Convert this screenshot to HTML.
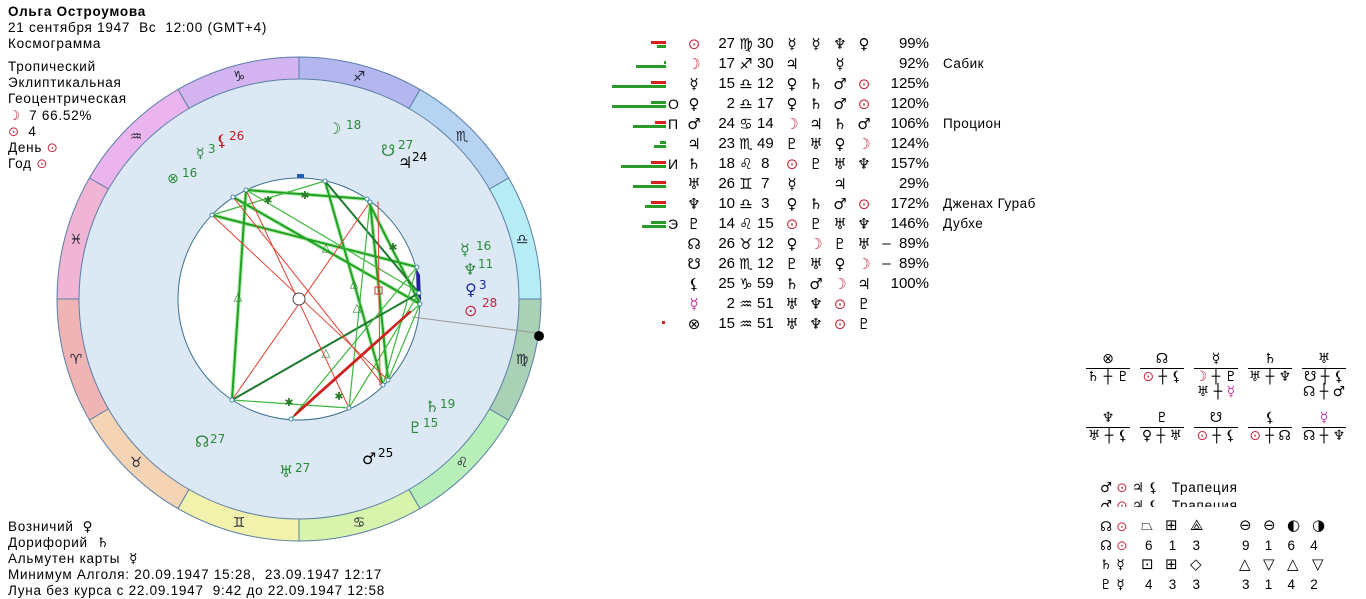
<!DOCTYPE html>
<html><head><meta charset="utf-8"><style>
body{margin:0;width:1366px;height:599px;background:#fff;position:relative;overflow:hidden;font-family:"Liberation Sans","DejaVu Sans",sans-serif;color:#000}
.t{position:absolute;font-size:13.5px;letter-spacing:.75px;white-space:nowrap;line-height:16px}
.y{font-family:"DejaVu Sans",sans-serif;letter-spacing:0}
.red{color:#c8283c}.grn{color:#2a8a2a}.pink{color:#c03aa0}.blu{color:#2030b0}
.row{position:absolute;left:0;height:20px;font-size:15px;line-height:20px;font-family:"Liberation Sans","DejaVu Sans",sans-serif}
.row span{position:absolute;top:0;white-space:nowrap}
.g,.s,.c1,.c2,.c3,.c4{font-family:"DejaVu Sans",sans-serif;font-size:15px}
.g{left:684px;width:20px;text-align:center}
.d{left:704px;width:31px;text-align:right}
.s{left:736px;width:20px;text-align:center}
.m{left:757px;width:22px}
.c1{left:780px;width:24px;text-align:center}
.c2{left:804px;width:24px;text-align:center}
.c3{left:828px;width:24px;text-align:center}
.c4{left:852px;width:24px;text-align:center}
.p{left:870px;width:59px;text-align:right}
.n{left:943px;font-size:13.5px;letter-spacing:.5px}
.l{left:668px;width:14px;font-size:14px}
.bar{position:absolute;height:3px}
.gb{background:#2a9a2a}.rb{background:#d82020}
.blk{position:absolute;text-align:center;font-size:14px;font-family:"DejaVu Sans",sans-serif;line-height:15px}
.blk .ln{height:1px;background:#000;margin:1px 0}
.sh{position:absolute;font-size:15px;font-family:"DejaVu Sans",sans-serif}
</style></head><body>
<div class="t" style="left:8px;top:4px;font-weight:bold">Ольга Остроумова</div>
<div class="t" style="left:8px;top:20px">21 сентября 1947&nbsp; Вс&nbsp; 12:00 (GMT+4)</div>
<div class="t" style="left:8px;top:36px">Космограмма</div>
<div class="t" style="left:8px;top:59px">Тропический</div>
<div class="t" style="left:8px;top:75px">Эклиптикальная</div>
<div class="t" style="left:8px;top:91px">Геоцентрическая</div>
<div class="t" style="left:8px;top:108px"><span class="red y">☽</span>&nbsp; 7 66.52%</div>
<div class="t" style="left:8px;top:124px"><span class="red y">⊙</span>&nbsp; 4</div>
<div class="t" style="left:8px;top:140px">День <span class="red y">⊙</span></div>
<div class="t" style="left:8px;top:156px">Год <span class="red y">⊙</span></div>

<div class="t" style="left:8px;top:519px">Возничий &nbsp;<span class="y">♀</span></div>
<div class="t" style="left:8px;top:535px">Дорифорий &nbsp;<span class="y">♄</span></div>
<div class="t" style="left:8px;top:551px">Альмутен карты &nbsp;<span class="y">☿</span></div>
<div class="t" style="left:8px;top:567px">Минимум Алголя: 20.09.1947 15:28,&nbsp; 23.09.1947 12:17</div>
<div class="t" style="left:8px;top:583px">Луна без курса с 22.09.1947&nbsp; 9:42 до 22.09.1947 12:58</div>

<svg style="position:absolute;left:0;top:0" width="600" height="599" viewBox="0 0 600 599" font-family="DejaVu Sans,sans-serif">
<circle cx="299" cy="299" r="220" fill="#dce8f3"/>
<g stroke="#5a7fa8" stroke-width="1">
<path d="M541,299 A242,242 0 0 0 508.6,178 L489.5,189 A220,220 0 0 1 519,299Z" fill="#b6ecf4"/>
<path d="M508.6,178 A242,242 0 0 0 420,89.4 L409,108.5 A220,220 0 0 1 489.5,189Z" fill="#b6d4f2"/>
<path d="M420,89.4 A242,242 0 0 0 299,57 L299,79 A220,220 0 0 1 409,108.5Z" fill="#b4b6f0"/>
<path d="M299,57 A242,242 0 0 0 178,89.4 L189,108.5 A220,220 0 0 1 299,79Z" fill="#d4b4f0"/>
<path d="M178,89.4 A242,242 0 0 0 89.4,178 L108.5,189 A220,220 0 0 1 189,108.5Z" fill="#ecb4ee"/>
<path d="M89.4,178 A242,242 0 0 0 57,299 L79,299 A220,220 0 0 1 108.5,189Z" fill="#f0b4d4"/>
<path d="M57,299 A242,242 0 0 0 89.4,420 L108.5,409 A220,220 0 0 1 79,299Z" fill="#f0b4b4"/>
<path d="M89.4,420 A242,242 0 0 0 178,508.6 L189,489.5 A220,220 0 0 1 108.5,409Z" fill="#f4d4b4"/>
<path d="M178,508.6 A242,242 0 0 0 299,541 L299,519 A220,220 0 0 1 189,489.5Z" fill="#f2f2ac"/>
<path d="M299,541 A242,242 0 0 0 420,508.6 L409,489.5 A220,220 0 0 1 299,519Z" fill="#d8f4ac"/>
<path d="M420,508.6 A242,242 0 0 0 508.6,420 L489.5,409 A220,220 0 0 1 409,489.5Z" fill="#b8eeb8"/>
<path d="M508.6,420 A242,242 0 0 0 541,299 L519,299 A220,220 0 0 1 489.5,409Z" fill="#aad0b6"/>
</g>
<circle cx="299" cy="299" r="121" fill="#fff" stroke="#3a7090"/>
<g font-size="14" fill="#223" text-anchor="middle">
<text x="522" y="244">♎</text><text x="462" y="141">♏</text><text x="359" y="81">♐</text><text x="239" y="81">♑</text>
<text x="136" y="141">♒</text><text x="76" y="244">♓</text><text x="76" y="364">♈</text><text x="136" y="467">♉</text>
<text x="239" y="527">♊</text><text x="359" y="527">♋</text><text x="462" y="467">♌</text><text x="522" y="364">♍</text>
</g>
<line x1="412" y1="317" x2="537" y2="333" stroke="#999"/>
<circle cx="539" cy="336" r="5" fill="#000"/>
<rect x="297" y="174" width="7" height="4" fill="#2060b0"/>
<path d="M416,268 L420,275 L421,300 L417,305Z" fill="#2020a0"/>
<g fill="none" stroke-linecap="round">
<g stroke="#9ee89e" stroke-width="4" opacity=".8">
<line x1="246" y1="190" x2="232" y2="400"/><line x1="246" y1="190" x2="367" y2="199"/><line x1="212" y1="215" x2="417" y2="267"/>
<line x1="233" y1="197" x2="420" y2="304"/><line x1="325" y1="181" x2="383" y2="385"/><line x1="370" y1="202" x2="388" y2="380"/><line x1="367" y1="199" x2="420" y2="304"/>
</g>
<g stroke="#22a022" stroke-width="2">
<line x1="246" y1="190" x2="232" y2="400"/><line x1="246" y1="190" x2="367" y2="199"/><line x1="212" y1="215" x2="417" y2="267"/>
<line x1="233" y1="197" x2="420" y2="304"/><line x1="325" y1="181" x2="383" y2="385"/><line x1="370" y1="202" x2="388" y2="380"/><line x1="367" y1="199" x2="420" y2="304"/>
</g>
<g stroke="#1f7a2f" stroke-width="2"><line x1="232" y1="400" x2="419" y2="293"/><line x1="325" y1="181" x2="419" y2="293"/></g>
<g stroke="#3cb83c" stroke-width="1.2">
<line x1="212" y1="215" x2="325" y2="181"/><line x1="232" y1="400" x2="349" y2="408"/><line x1="291" y1="419" x2="417" y2="267"/>
<line x1="349" y1="408" x2="419" y2="293"/><line x1="383" y1="385" x2="417" y2="267"/><line x1="388" y1="380" x2="420" y2="304"/>
<line x1="246" y1="190" x2="420" y2="293"/><line x1="291" y1="419" x2="420" y2="304"/><line x1="370" y1="202" x2="349" y2="408"/>
</g>
<g stroke="#e04030" stroke-width="1">
<line x1="212" y1="215" x2="388" y2="380"/><line x1="246" y1="190" x2="349" y2="408"/><line x1="370" y1="202" x2="232" y2="400"/>
<line x1="233" y1="197" x2="383" y2="385"/><line x1="378" y1="202" x2="380" y2="385"/>
</g>
<g stroke="#d02020" stroke-width="2.5"><line x1="295" y1="415" x2="390" y2="330"/><line x1="300" y1="410" x2="410" y2="312"/></g>
</g>
<circle cx="299" cy="299" r="6" fill="#fff" stroke="#444"/>
<g fill="#fff" stroke="#2070a0" stroke-width=".8">
<circle cx="246" cy="190" r="2"/><circle cx="233" cy="197" r="2"/><circle cx="212" cy="215" r="2"/><circle cx="325" cy="181" r="2"/><circle cx="367" cy="199" r="2"/><circle cx="370" cy="202" r="2"/>
<circle cx="417" cy="267" r="2"/><circle cx="419" cy="293" r="2"/><circle cx="420" cy="304" r="2"/><circle cx="388" cy="380" r="2"/><circle cx="383" cy="385" r="2"/><circle cx="349" cy="408" r="2"/><circle cx="291" cy="419" r="2"/><circle cx="232" cy="400" r="2"/>
</g>
<g font-size="11" fill="#2a7a2a" text-anchor="middle">
<text x="238" y="300">△</text><text x="326" y="251">△</text><text x="354" y="287">△</text><text x="357" y="311">△</text><text x="326" y="356">△</text>
<text x="268" y="204">✱</text><text x="305" y="199">✱</text><text x="393" y="251">✱</text><text x="289" y="406">✱</text><text x="339" y="400">✱</text>
</g>
<rect x="375" y="287" width="7" height="7" fill="none" stroke="#d03030"/>
<g font-size="16" fill="#2a8a3a">
<text x="327" y="134">☽</text><text x="346" y="129" font-size="12">18</text>
<text x="381" y="156">☋</text><text x="398" y="149" font-size="12">27</text>
<text x="398" y="168" fill="#000">♃</text><text x="412" y="161" font-size="12" fill="#000">24</text>
<text x="216" y="146" fill="#d01818">⚸</text><text x="229" y="140" font-size="12" fill="#d01818">26</text>
<text x="196" y="158" font-size="14">☿</text><text x="208" y="153" font-size="12">3</text>
<text x="167" y="183" font-size="14">⊗</text><text x="182" y="177" font-size="12">16</text>
<text x="460" y="255">☿</text><text x="476" y="250" font-size="12">16</text>
<text x="463" y="275">♆</text><text x="478" y="268" font-size="12">11</text>
<text x="465" y="295" fill="#1a2ab0">♀</text><text x="479" y="289" font-size="12" fill="#1a2ab0">3</text>
<text x="464" y="316" fill="#d02040">⊙</text><text x="482" y="307" font-size="12" fill="#d02040">28</text>
<text x="425" y="412">♄</text><text x="440" y="408" font-size="12">19</text>
<text x="408" y="433">♇</text><text x="423" y="427" font-size="12">15</text>
<text x="362" y="464" fill="#000">♂</text><text x="378" y="457" font-size="12" fill="#000">25</text>
<text x="279" y="477">♅</text><text x="295" y="472" font-size="12">27</text>
<text x="195" y="447">☊</text><text x="210" y="443" font-size="12">27</text>
</g>
</svg>

<div class="bar rb" style="left:651px;top:41px;width:15px"></div><div class="bar gb" style="left:657px;top:45px;width:9px"></div>
<div class="bar gb" style="left:664px;top:61px;width:2px"></div><div class="bar gb" style="left:636px;top:65px;width:30px"></div>
<div class="bar rb" style="left:651px;top:81px;width:15px"></div><div class="bar gb" style="left:612px;top:85px;width:54px"></div>
<div class="bar gb" style="left:651px;top:101px;width:15px"></div><div class="bar gb" style="left:612px;top:105px;width:54px"></div>
<div class="bar rb" style="left:655px;top:121px;width:11px"></div><div class="bar gb" style="left:633px;top:125px;width:33px"></div>
<div class="bar gb" style="left:660px;top:141px;width:6px"></div><div class="bar gb" style="left:654px;top:145px;width:12px"></div>
<div class="bar rb" style="left:651px;top:161px;width:15px"></div><div class="bar gb" style="left:621px;top:165px;width:45px"></div>
<div class="bar rb" style="left:651px;top:181px;width:15px"></div><div class="bar gb" style="left:633px;top:185px;width:33px"></div>
<div class="bar rb" style="left:651px;top:201px;width:15px"></div><div class="bar gb" style="left:645px;top:205px;width:21px"></div>
<div class="bar gb" style="left:651px;top:221px;width:15px"></div><div class="bar gb" style="left:642px;top:225px;width:24px"></div>
<div class="bar rb" style="left:662px;top:321px;width:3px;height:3px"></div>

<div class="row" style="top:34px"><span class="g red">⊙</span><span class="d">27</span><span class="s">♍</span><span class="m">30</span><span class="c1">☿</span><span class="c2">☿</span><span class="c3">♆</span><span class="c4">♀</span><span class="p">99%</span></div>
<div class="row" style="top:54px"><span class="g red">☽</span><span class="d">17</span><span class="s">♐</span><span class="m">30</span><span class="c1">♃</span><span class="c3">☿</span><span class="p">92%</span><span class="n">Сабик</span></div>
<div class="row" style="top:74px"><span class="g">☿</span><span class="d">15</span><span class="s">♎</span><span class="m">12</span><span class="c1">♀</span><span class="c2">♄</span><span class="c3">♂</span><span class="c4 red">⊙</span><span class="p">125%</span></div>
<div class="row" style="top:94px"><span class="l">О</span><span class="g">♀</span><span class="d">2</span><span class="s">♎</span><span class="m">17</span><span class="c1">♀</span><span class="c2">♄</span><span class="c3">♂</span><span class="c4 red">⊙</span><span class="p">120%</span></div>
<div class="row" style="top:114px"><span class="l">П</span><span class="g">♂</span><span class="d">24</span><span class="s">♋</span><span class="m">14</span><span class="c1 red">☽</span><span class="c2">♃</span><span class="c3">♄</span><span class="c4">♂</span><span class="p">106%</span><span class="n">Процион</span></div>
<div class="row" style="top:134px"><span class="g">♃</span><span class="d">23</span><span class="s">♏</span><span class="m">49</span><span class="c1">♇</span><span class="c2">♅</span><span class="c3">♀</span><span class="c4 red">☽</span><span class="p">124%</span></div>
<div class="row" style="top:154px"><span class="l">И</span><span class="g">♄</span><span class="d">18</span><span class="s">♌</span><span class="m">&nbsp;8</span><span class="c1 red">⊙</span><span class="c2">♇</span><span class="c3">♅</span><span class="c4">♆</span><span class="p">157%</span></div>
<div class="row" style="top:174px"><span class="g">♅</span><span class="d">26</span><span class="s">♊</span><span class="m">&nbsp;7</span><span class="c1">☿</span><span class="c3">♃</span><span class="p">29%</span></div>
<div class="row" style="top:194px"><span class="g">♆</span><span class="d">10</span><span class="s">♎</span><span class="m">&nbsp;3</span><span class="c1">♀</span><span class="c2">♄</span><span class="c3">♂</span><span class="c4 red">⊙</span><span class="p">172%</span><span class="n">Дженах Гураб</span></div>
<div class="row" style="top:214px"><span class="l">Э</span><span class="g">♇</span><span class="d">14</span><span class="s">♌</span><span class="m">15</span><span class="c1 red">⊙</span><span class="c2">♇</span><span class="c3">♅</span><span class="c4">♆</span><span class="p">146%</span><span class="n">Дубхе</span></div>
<div class="row" style="top:234px"><span class="g">☊</span><span class="d">26</span><span class="s">♉</span><span class="m">12</span><span class="c1">♀</span><span class="c2 red">☽</span><span class="c3">♇</span><span class="c4">♅</span><span class="p">–&nbsp; 89%</span></div>
<div class="row" style="top:254px"><span class="g">☋</span><span class="d">26</span><span class="s">♏</span><span class="m">12</span><span class="c1">♇</span><span class="c2">♅</span><span class="c3">♀</span><span class="c4 red">☽</span><span class="p">–&nbsp; 89%</span></div>
<div class="row" style="top:274px"><span class="g">⚸</span><span class="d">25</span><span class="s">♑</span><span class="m">59</span><span class="c1">♄</span><span class="c2">♂</span><span class="c3 red">☽</span><span class="c4">♃</span><span class="p">100%</span></div>
<div class="row" style="top:294px"><span class="g pink">☿</span><span class="d">2</span><span class="s">♒</span><span class="m">51</span><span class="c1">♅</span><span class="c2">♆</span><span class="c3 red">⊙</span><span class="c4">♇</span></div>
<div class="row" style="top:314px"><span class="g">⊗</span><span class="d">15</span><span class="s">♒</span><span class="m">51</span><span class="c1">♅</span><span class="c2">♆</span><span class="c3 red">⊙</span><span class="c4">♇</span></div>

<div class="blk" style="left:1086px;top:352px;width:44px">⊗<div class="ln"></div>♄ ┼ ♇</div>
<div class="blk" style="left:1140px;top:352px;width:44px">☊<div class="ln"></div><span class="red">⊙</span> ┼ ⚸</div>
<div class="blk" style="left:1194px;top:352px;width:44px">☿<div class="ln"></div><span class="red">☽</span> ┼ ♇<br>♅ ┼ <span class="pink">☿</span></div>
<div class="blk" style="left:1248px;top:352px;width:44px">♄<div class="ln"></div>♅ ┼ ♆</div>
<div class="blk" style="left:1302px;top:352px;width:44px">♅<div class="ln"></div>☋ ┼ ⚸<br>☊ ┼ ♂</div>
<div class="blk" style="left:1086px;top:411px;width:44px">♆<div class="ln"></div>♅ ┼ ⚸</div>
<div class="blk" style="left:1140px;top:411px;width:44px">♇<div class="ln"></div>♀ ┼ ♅</div>
<div class="blk" style="left:1194px;top:411px;width:44px">☋<div class="ln"></div><span class="red">⊙</span> ┼ ⚸</div>
<div class="blk" style="left:1248px;top:411px;width:44px">⚸<div class="ln"></div><span class="red">⊙</span> ┼ ☊</div>
<div class="blk" style="left:1302px;top:411px;width:44px"><span class="pink">☿</span><div class="ln"></div>☊ ┼ ♆</div>

<div class="t" style="left:1100px;top:480px"><span class="y">♂ <span class="red">⊙</span> ♃ ⚸</span>&nbsp;&nbsp; Трапеция</div>
<div class="t" style="left:1100px;top:498px;height:9px;overflow:hidden"><span class="y">♂ <span class="red">⊙</span> ♃ ⚸</span>&nbsp;&nbsp; Трапеция</div>
<div class="t y" style="left:1100px;top:519px">☊ <span class="red">⊙</span></div>
<div class="t y" style="left:1100px;top:538px">☊ <span class="red">⊙</span></div>
<div class="t y" style="left:1100px;top:557px">♄ ☿</div>
<div class="t y" style="left:1100px;top:577px">♇ ☿</div>
<div class="sh" style="left:1141px;top:516px">⏢</div><div class="sh" style="left:1165px;top:516px">⊞</div><div class="sh" style="left:1190px;top:516px">⟁</div>
<div class="t" style="left:1145px;top:538px;word-spacing:11px">6 1 3</div>
<div class="sh" style="left:1141px;top:555px">⊡</div><div class="sh" style="left:1165px;top:555px">⊞</div><div class="sh" style="left:1190px;top:555px">◇</div>
<div class="t" style="left:1145px;top:577px;word-spacing:11px">4 3 3</div>
<div class="sh" style="left:1239px;top:516px">⊖</div><div class="sh" style="left:1263px;top:516px">⊖</div><div class="sh" style="left:1287px;top:516px">◐</div><div class="sh" style="left:1312px;top:516px">◑</div>
<div class="t" style="left:1242px;top:538px;word-spacing:10px">9 1 6 4</div>
<div class="sh" style="left:1239px;top:555px">△</div><div class="sh" style="left:1263px;top:555px">▽</div><div class="sh" style="left:1287px;top:555px">△</div><div class="sh" style="left:1312px;top:555px">▽</div>
<div class="t" style="left:1242px;top:577px;word-spacing:10px">3 1 4 2</div>
</body></html>
